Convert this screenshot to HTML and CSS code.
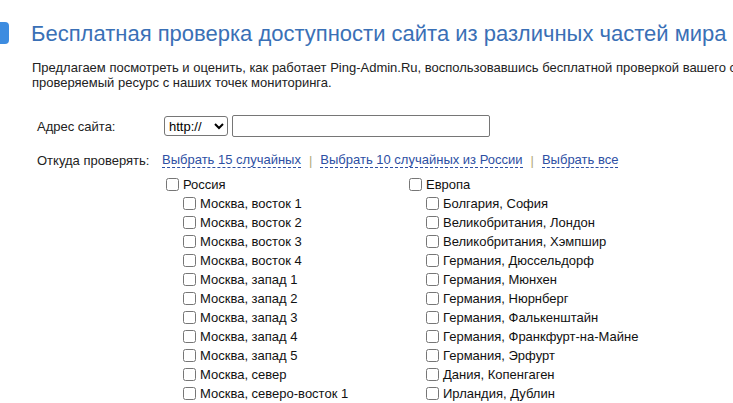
FILE: index.html
```
<!DOCTYPE html>
<html lang="ru">
<head>
  <meta charset="UTF-8">
  <meta name="viewport" content="width=device-width, initial-scale=1.0">
  <title>Проверка доступности сайта</title>
  <link rel="stylesheet" href="styles.css">
</head>
<body>
  <div class="page">
    <h1 class="title">Бесплатная проверка доступности сайта из различных частей мира</h1>
    <p class="intro">Предлагаем посмотреть и оценить, как работает Ping-Admin.Ru, воспользовавшись бесплатной проверкой вашего сайта. Мы опросим<br>
      проверяемый ресурс с наших точек мониторинга.</p>

    <form class="checkForm">
      <div class="formRow">
        <label class="formLabel">Адрес сайта:</label>
        <div class="formField">
          <select class="proto">
            <option>http://</option>
            <option>https://</option>
          </select>
          <input type="text" class="url">
        </div>
      </div>

      <div class="formRow">
        <span class="formLabel">Откуда проверять:</span>
        <div class="formField links">
          <a href="#" class="dashed">Выбрать 15 случайных</a>
          <span class="sep">|</span>
          <a href="#" class="dashed">Выбрать 10 случайных из России</a>
          <span class="sep">|</span>
          <a href="#" class="dashed">Выбрать все</a>
        </div>
      </div>

      <div class="regions">
        <div class="region">
          <label class="group"><input type="checkbox"> Россия</label>
          <label class="point"><input type="checkbox"> Москва, восток 1</label>
          <label class="point"><input type="checkbox"> Москва, восток 2</label>
          <label class="point"><input type="checkbox"> Москва, восток 3</label>
          <label class="point"><input type="checkbox"> Москва, восток 4</label>
          <label class="point"><input type="checkbox"> Москва, запад 1</label>
          <label class="point"><input type="checkbox"> Москва, запад 2</label>
          <label class="point"><input type="checkbox"> Москва, запад 3</label>
          <label class="point"><input type="checkbox"> Москва, запад 4</label>
          <label class="point"><input type="checkbox"> Москва, запад 5</label>
          <label class="point"><input type="checkbox"> Москва, север</label>
          <label class="point"><input type="checkbox"> Москва, северо-восток 1</label>
        </div>
        <div class="region">
          <label class="group"><input type="checkbox"> Европа</label>
          <label class="point"><input type="checkbox"> Болгария, София</label>
          <label class="point"><input type="checkbox"> Великобритания, Лондон</label>
          <label class="point"><input type="checkbox"> Великобритания, Хэмпшир</label>
          <label class="point"><input type="checkbox"> Германия, Дюссельдорф</label>
          <label class="point"><input type="checkbox"> Германия, Мюнхен</label>
          <label class="point"><input type="checkbox"> Германия, Нюрнберг</label>
          <label class="point"><input type="checkbox"> Германия, Фалькенштайн</label>
          <label class="point"><input type="checkbox"> Германия, Франкфурт-на-Майне</label>
          <label class="point"><input type="checkbox"> Германия, Эрфурт</label>
          <label class="point"><input type="checkbox"> Дания, Копенгаген</label>
          <label class="point"><input type="checkbox"> Ирландия, Дублин</label>
        </div>
      </div>
    </form>
  </div>
</body>
</html>
```
FILE: styles.css
```
html, body{
  overflow: hidden;
}
body{
  margin: 0;
  background: #fff;
  color: #222;
  font-family: "Liberation Sans", Arial, sans-serif;
  font-size: 13px;
}
.page{
  width: 900px;
  padding-top: 21px;
}

.title{
  position: relative;
  margin: 0 0 14px 0;
  padding-left: 31px;
  font-size: 22px;
  font-weight: normal;
  line-height: 25px;
  color: #3a70b6;
  white-space: nowrap;
}
.title::before{
  content: "";
  position: absolute;
  left: 0;
  top: 1px;
  width: 9px;
  height: 22px;
  background: #3d8ce0;
  border-radius: 0 4px 4px 0;
}

.intro{
  margin: 0 0 25px 32px;
  line-height: 15px;
}

.checkForm{
  padding-left: 37px;
}
.formRow{
  display: flex;
  align-items: center;
  margin-bottom: 16px;
}
.formLabel{
  width: 125px;
  flex-shrink: 0;
}
.formField{
  display: flex;
  align-items: center;
  gap: 4px;
}
.proto{
  height: 20px;
  width: 64px;
  margin-left: 2px;
  font-family: "Liberation Sans", Arial, sans-serif;
  font-size: 13px;
  color: #000;
  border: 1px solid #767676;
  border-radius: 3px;
  background: #fff;
}
.url{
  width: 258px;
  height: 22px;
  box-sizing: border-box;
  border: 1px solid #767676;
  border-radius: 2px;
}

.links{
  gap: 8px;
}
.dashed{
  color: #2d4fa3;
  text-decoration: none;
  border-bottom: 1px dashed #2d4fa3;
  line-height: 14px;
}
.sep{
  color: #b2a97a;
}

.regions{
  display: flex;
  padding-left: 125px;
  margin-top: -9px;
}
.region{
  width: 243px;
  display: flex;
  flex-direction: column;
}
.region label{
  display: flex;
  align-items: center;
  height: 19px;
  color: #111;
}
.region input{
  margin: 0 4px 0 4px;
  width: 13px;
  height: 13px;
}
.point{
  padding-left: 17px;
}
```
